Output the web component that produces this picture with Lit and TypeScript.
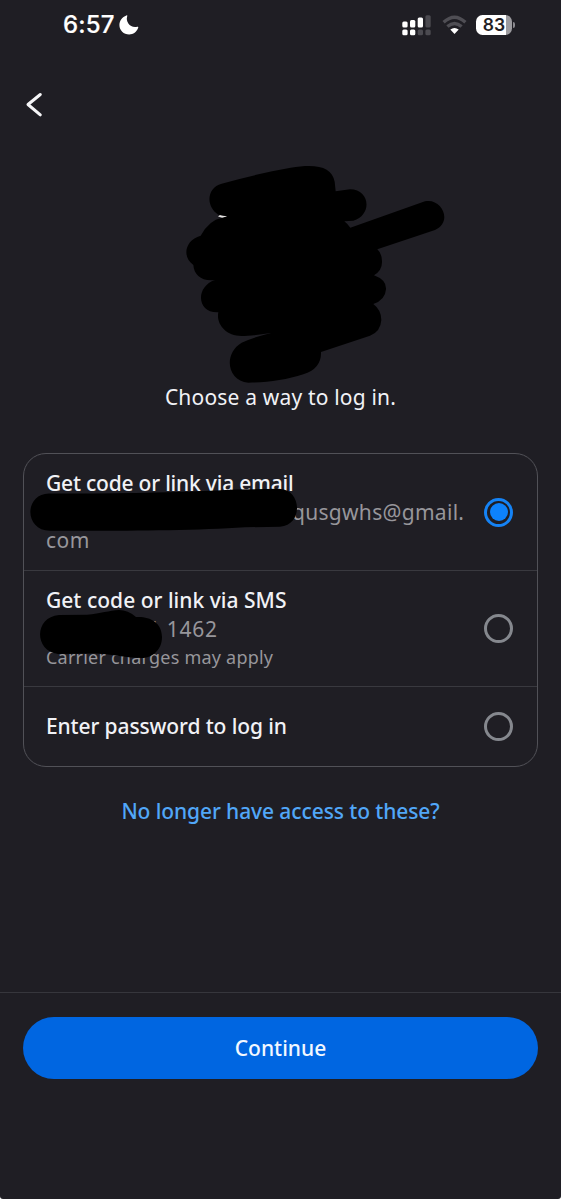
import { LitElement, html, css, svg, nothing } from "lit";
import { customElement, property, state } from "lit/decorators.js";

@customElement("status-bar")
class StatusBar extends LitElement {
  static styles = css`
    :host { display: flex; justify-content: space-between; align-items: center; height: 50px; padding: 0 46px 0 63px; box-sizing: border-box; }
    .left, .right { display: flex; align-items: center; }
    .time { font: 500 24px/52px Inter, sans-serif; color: #fff; letter-spacing: 0.15px; -webkit-text-stroke: 0.2px #fff; }
    .moon { margin-left: 4px; }
    .signal { margin-right: 11px; }
    .wifi { margin-right: 9px; }
    .battery { display: flex; align-items: center; }
    .level { width: 36px; height: 20px; border-radius: 6.5px; background: linear-gradient(90deg, #fff 30px, #9c9b9f 30px); color: #1f1e24; font: 600 17.5px/20px Inter, sans-serif; text-align: center; letter-spacing: 0.2px; }
    .tip { width: 2px; height: 6px; margin-left: 1px; border-radius: 0 3px 3px 0; background: #8b8a8f; }
    svg { display: block; }
  `;
  render() {
    return html`
      <div class="left">
        <span class="time">6:57</span>
        <svg class="moon" width="20" height="20" viewBox="0 0 20 20"><path d="M7.4 .4C8.1 0 8.5 .5 8.2 1.2C6.3 6.8 11.5 13.4 18.2 11.7C19 11.5 19.5 12 19.2 12.7C17.7 17 14.3 19.4 10.2 19.4C4.6 19.4.4 15.2.4 9.9C.4 5.6 3.2 1.9 7.4.4Z" fill="#fff"/></svg>
      </div>
      <div class="right">
        <svg class="signal" width="29" height="21" viewBox="0 0 29 21">
          <g fill="#fff">
            <rect x=".3" y="6.6" width="5.3" height="6" rx="1.5"/><rect x="8" y="5" width="5.3" height="7.6" rx="1.5"/><rect x="15.7" y="2.5" width="5.3" height="10.1" rx="1.5"/>
            <rect x=".3" y="14.5" width="5.3" height="5.7" rx="1.5"/><rect x="8" y="14.5" width="5.3" height="5.7" rx="1.5"/>
          </g>
          <g fill="#4b4a50"><rect x="23.4" y=".3" width="5.3" height="12.3" rx="1.5"/><rect x="15.7" y="14.5" width="5.3" height="5.7" rx="1.5"/><rect x="23.4" y="14.5" width="5.3" height="5.7" rx="1.5"/></g>
        </svg>
        <svg class="wifi" width="25" height="20" viewBox="0 0 25 20">
          <g fill="none" stroke="#4f4e54" stroke-width="3.3"><path d="M1.6 7.3Q12.5 -2.8 23.4 7.3"/><path d="M5.4 11.6Q12.5 5.3 19.6 11.6"/></g>
          <path d="M12.5 19L8.3 14.6Q12.500 11.2 16.7 14.6Z" fill="#fff"/>
        </svg>
        <div class="battery"><div class="level">83</div><div class="tip"></div></div>
      </div>`;
  }
}

@customElement("login-option")
class LoginOption extends LitElement {
  @property() label = "";
  @property() detail = "";
  @property() tail = "";
  @property() note = "";
  @property() kind = "";
  @property({ type: Boolean }) selected = false;
  static styles = css`
    :host { display: flex; position: relative; align-items: center; justify-content: space-between; padding: 0 24px 0 22px; box-sizing: border-box; font-family: "Noto Sans", sans-serif; }
    .copy { display: flex; flex-direction: column; }
    .label { font-size: 21px; line-height: 29px; font-weight: 500; color: #f1f2f6; white-space: nowrap; letter-spacing: -0.12px; }
    .email .label { letter-spacing: -0.21px; }
    .sms .label { letter-spacing: 0.02px; }
    .detail { font-size: 21px; line-height: 28px; color: #97969b; white-space: nowrap; }
    .email .detail { padding-left: 246px; letter-spacing: 0.3px; }
    .sms .detail { padding-left: 102px; letter-spacing: 0.7px; }
    .tail { font-size: 21px; line-height: 29px; color: #97969b; letter-spacing: 0.5px; }
    .note { font-size: 18px; line-height: 28px; color: #97969b; letter-spacing: 0.22px; }
    .radio { display: grid; place-items: center; flex: none; width: 29px; height: 29px; box-sizing: border-box; border: 3px solid #85888e; border-radius: 50%; }
    .on { border-color: #1583f5; }
    .dot { width: 18px; height: 18px; border-radius: 50%; background: #0d82fc; }
    .ink { position: absolute; left: 0; top: 0; overflow: visible; }
  `;
  ink() {
    if (this.kind === "email")
      return html`<svg class="ink" width="290" height="116" viewBox="24 454 290 116"><path d="M49 493.500C110 494 180 492.500 235 489.500L278 488.800C302 488 304 525 280 526.700L245 527.300C190 531 110 531 50 530.800C24 530.500 24 494 49 493.500Z"/></svg>`;
    if (this.kind === "sms")
      return html`<svg class="ink" width="290" height="115" viewBox="24 571 290 115"><path d="M59 615L87 614.700C101 613.500 109 610.500 119 610Q128 610 136 617C149 616 162 622 162 637C162 651 151 658 142 658C123 658 111 653.500 95 653.500L58 654C34 651 34 617 59 615Z"/></svg>`;
    return nothing;
  }
  render() {
    return html`
      <div class="copy ${this.kind}">
        <div class="label">${this.label}</div>
        ${this.detail ? html`<div class="detail">${this.detail}</div>` : nothing}
        ${this.tail ? html`<div class="tail">${this.tail}</div>` : nothing}
        ${this.note ? html`<div class="note">${this.note}</div>` : nothing}
      </div>
      <div class="radio ${this.selected ? "on" : ""}">${this.selected ? html`<div class="dot"></div>` : nothing}</div>
      ${this.ink()}`;
  }
}

@customElement("app-root")
class AppRoot extends LitElement {
  @state() choice = "email";
  static styles = css`
    :host { display: block; background: #fff; }
    .screen { display: flex; flex-direction: column; height: 1199px; box-sizing: border-box; background: #1f1e24; border-radius: 0 0 3px 3px; font-family: "Noto Sans", sans-serif; overflow: hidden; }
    .nav { height: 100px; padding: 42px 0 0 25px; box-sizing: border-box; }
    .nav svg, .hero { display: block; }
    .hero { flex: none; }
    .title { margin: -7px 0 0; height: 28px; font-size: 21px; line-height: 28px; font-weight: 400; letter-spacing: 0.18px; text-align: center; color: #f1f2f6; position: relative; }
    .card { margin: 42px 23px 0; height: 314px; box-sizing: border-box; border: 1px solid #515157; border-radius: 23px; display: grid; grid-template-rows: 116px 116px 1fr; }
    .row + .row { border-top: 1px solid #39393f; }
    .link { margin: 30px 0 0; text-align: center; font-size: 21px; line-height: 29px; font-weight: 500; letter-spacing: -0.1px; color: #51a7f8; }
    .footer { margin-top: auto; height: 207px; box-sizing: border-box; border-top: 1px solid #36363c; padding: 24px 23px 0; }
    .button { display: block; width: 100%; height: 62px; border: 0; border-radius: 31px; background: #0066e1; color: #f2f8ff; font: 500 21px/62px "Noto Sans", sans-serif; padding: 0; }
  `;
  render() {
    return html`<div class="screen">
      <status-bar></status-bar>
      <div class="nav"><svg width="20" height="26" viewBox="0 0 20 26"><path d="M15.300 2.500L3 12.500L15.300 22.800" fill="none" stroke="#f5f5f7" stroke-width="3" stroke-linecap="round" stroke-linejoin="round"/></svg></div>
      <svg class="hero" width="561" height="240" viewBox="0 0 561 240">
        ${svg`<path d="M218 66.500L220 65L228 66.500L223 68Z" fill="#e6e4e2"/>
        <path transform="translate(170 0) scale(.33333)" d="M155 101C220 83 290 66 362 53C440 40 486 50 494 95L497 124L540 118C600 118 608 195 550 212L523 214Q533 222 541 233L765 154C815 143 850 215 795 240L622 298Q637 312 636 337Q636 362 612 376Q650 390 648 418Q646 450 610 462Q634 480 634 510Q632 545 600 557L453 606Q455 655 400 673C350 690 290 698 235 698C170 692 160 610 215 578Q250 562 303 549Q240 558 215 558C165 558 138 520 145 487C80 490 75 410 135 390C95 395 72 375 70 345C35 320 45 270 92 257Q118 210 155 204L172 199L145 194C106 170 110 112 155 101Z" fill="#000"/>`}
      </svg>
      <h1 class="title">Choose a way to log in.</h1>
      <div class="card">
        <login-option class="row" kind="email" label="Get code or link via email" detail="qusgwhs@gmail." tail="com" ?selected=${this.choice === "email"}></login-option>
        <login-option class="row" kind="sms" label="Get code or link via SMS" detail="1 1462" note="Carrier charges may apply" ?selected=${this.choice === "sms"}></login-option>
        <login-option class="row" kind="password" label="Enter password to log in" ?selected=${this.choice === "password"}></login-option>
      </div>
      <div class="link">No longer have access to these?</div>
      <div class="footer"><button class="button">Continue</button></div>
    </div>`;
  }
}
